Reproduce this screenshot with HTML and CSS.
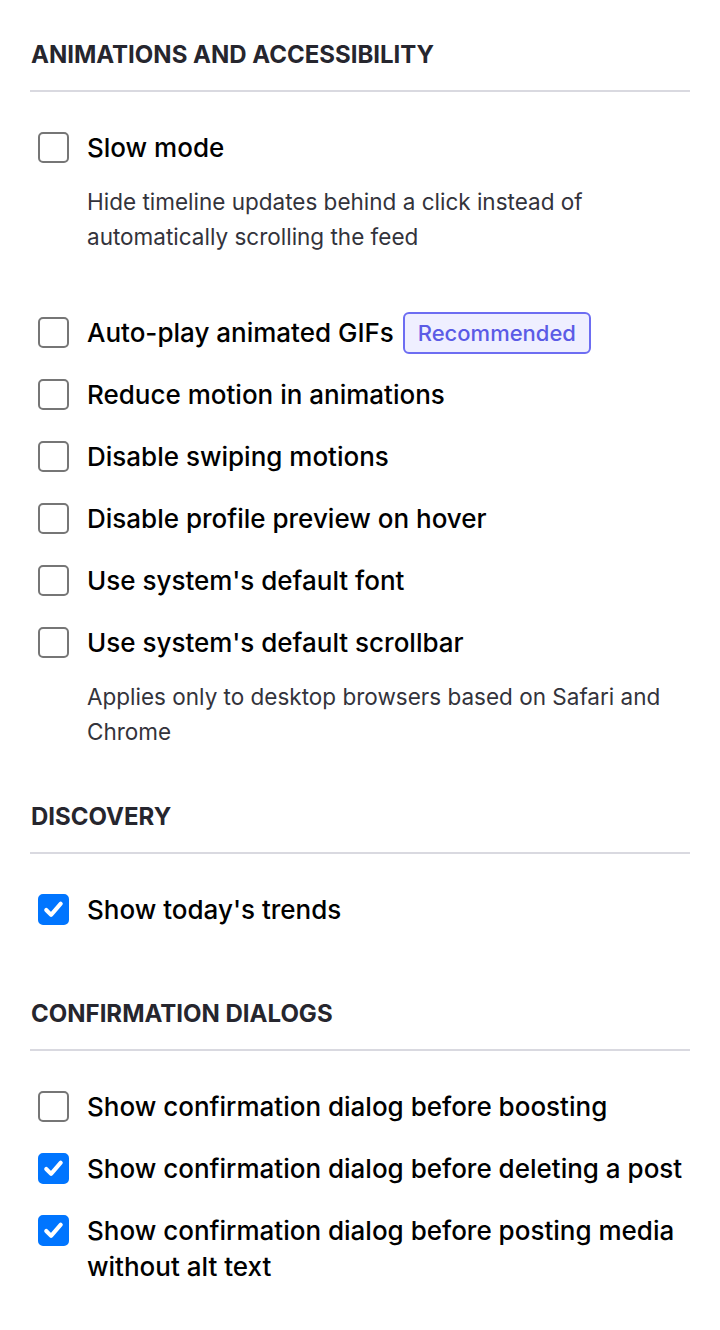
FILE: index.html
```html
<!DOCTYPE html>
<html lang="en">
<head>
<meta charset="utf-8">
<title>Preferences</title>
<link rel="stylesheet" href="styles.css">
</head>
<body>
<main class="page">

  <section class="group">
    <h3 class="heading">Animations and accessibility</h3>
    <ul class="options">
      <li class="option option--hint">
        <label class="row"><span class="box"></span><span class="text">Slow mode</span></label>
        <p class="hint">Hide timeline updates behind a click instead of automatically scrolling the feed</p>
      </li>
      <li class="option">
        <label class="row"><span class="box"></span><span class="text">Auto-play animated GIFs <span class="badge">Recommended</span></span></label>
      </li>
      <li class="option">
        <label class="row"><span class="box"></span><span class="text">Reduce motion in animations</span></label>
      </li>
      <li class="option">
        <label class="row"><span class="box"></span><span class="text">Disable swiping motions</span></label>
      </li>
      <li class="option">
        <label class="row"><span class="box"></span><span class="text">Disable profile preview on hover</span></label>
      </li>
      <li class="option">
        <label class="row"><span class="box"></span><span class="text">Use system's default font</span></label>
      </li>
      <li class="option option--tail">
        <label class="row"><span class="box"></span><span class="text">Use system's default scrollbar</span></label>
        <p class="hint">Applies only to desktop browsers based on Safari and Chrome</p>
      </li>
    </ul>
  </section>

  <section class="group">
    <h3 class="heading">Discovery</h3>
    <ul class="options">
      <li class="option">
        <label class="row"><span class="box box--on"><svg viewBox="0 0 32 32"><path d="M8.5 16.5 L13.5 21.5 L23.5 10" /></svg></span><span class="text">Show today's trends</span></label>
      </li>
    </ul>
  </section>

  <section class="group">
    <h3 class="heading">Confirmation dialogs</h3>
    <ul class="options">
      <li class="option">
        <label class="row"><span class="box"></span><span class="text">Show confirmation dialog before boosting</span></label>
      </li>
      <li class="option">
        <label class="row"><span class="box box--on"><svg viewBox="0 0 32 32"><path d="M8.5 16.5 L13.5 21.5 L23.5 10" /></svg></span><span class="text">Show confirmation dialog before deleting a post</span></label>
      </li>
      <li class="option">
        <label class="row"><span class="box box--on"><svg viewBox="0 0 32 32"><path d="M8.5 16.5 L13.5 21.5 L23.5 10" /></svg></span><span class="text">Show confirmation dialog before posting media without alt text</span></label>
      </li>
    </ul>
  </section>

</main>
</body>
</html>
```

FILE: styles.css
```css
* { box-sizing: border-box; }

html, body {
  margin: 0;
  padding: 0;
  background: #ffffff;
}

body {
  font-family: Inter, Roboto, "Liberation Sans", Arial, sans-serif;
  color: #000;
}

.page {
  display: flex;
  flex-direction: column;
  gap: 53px;
  padding: 40px 30px 40px 30px;
}

.heading {
  margin: 0 0 38px 0;
  padding: 0 0 20px 1px;
  font-size: 24px;
  line-height: 30px;
  font-weight: 700;
  text-transform: uppercase;
  color: #26262e;
  border-bottom: 2px solid #d9d9e0;
}

.options {
  list-style: none;
  margin: 0;
  padding: 0;
}

.option {
  margin-bottom: 26px;
}

.option:last-child {
  margin-bottom: 18px;
}

.option--hint {
  margin-bottom: 61px;
}

.option.option--tail {
  margin-bottom: 0;
}

.row {
  display: flex;
  align-items: flex-start;
  gap: 18px;
  padding-left: 8px;
}

.box {
  flex: none;
  width: 31px;
  height: 31px;
  margin-top: 2px;
  border: 2px solid #767676;
  border-radius: 5px;
  background: #fff;
  display: flex;
  align-items: center;
  justify-content: center;
}

.box--on {
  background: #0075ff;
  border-color: #0075ff;
}

.box svg {
  width: 31px;
  height: 31px;
  flex: none;
}

.box svg path {
  fill: none;
  stroke: #fff;
  stroke-width: 4.2;
  stroke-linecap: round;
  stroke-linejoin: round;
}

.text {
  font-size: 26px;
  line-height: 36px;
  font-weight: 500;
  color: #000;
}

.badge {
  display: inline-block;
  vertical-align: top;
  margin: -3px 0 -3px 2px;
  height: 42px;
  padding: 0 13px;
  border: 2px solid #6d6df2;
  border-radius: 6px;
  background: #efefff;
  color: #5b5be6;
  font-size: 22px;
  line-height: 38px;
  font-weight: 500;
}

.hint {
  margin: 18px 0 0 0;
  padding-left: 57px;
  font-size: 22.5px;
  line-height: 35px;
  font-weight: 400;
  color: #33333b;
}
```
